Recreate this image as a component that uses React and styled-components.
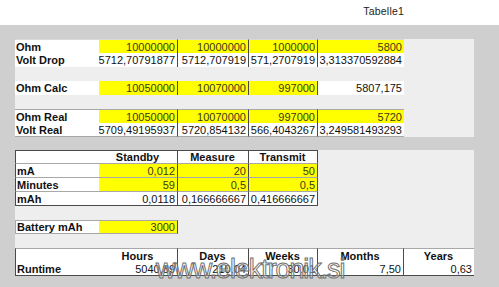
import React from "react";
import styled, { createGlobalStyle } from "styled-components";

const GlobalStyle = createGlobalStyle`
  body {
    margin: 0;
    background: #ffffff;
    font-family: "Liberation Sans", Arial, sans-serif;
  }
`;

const COLS = "84px 79px 71px 69px 86px 70px";
const DARK = "#4a4a4a";
const LIGHT = "#a8a8a8";

const Page = styled.div`
  width: 499px;
  height: 287px;
  display: flex;
  flex-direction: column;
  overflow: hidden;
`;

const TitleBar = styled.div`
  height: 25px;
  box-sizing: border-box;
  display: flex;
  justify-content: flex-end;
  padding: 5px 95px 0 0;
  font-size: 10.5px;
  color: #222;
  letter-spacing: 0.2px;
`;

const Canvas = styled.div`
  position: relative;
  flex: 1;
  background: #cfcfcf;
  padding: 14px 25px 0 15px;
  display: flex;
  flex-direction: column;
  gap: 13px;
`;

const Sheet = styled.div`
  width: 459px;
  background: #eeeeee;
  display: flex;
  flex-direction: column;
`;

const Row = styled.div`
  display: grid;
  grid-template-columns: ${COLS};
  height: 14px;
`;

const fills = { yellow: "#ffff00", white: "#ffffff" };

const Cell = styled.div`
  box-sizing: border-box;
  height: 14px;
  display: flex;
  align-items: center;
  justify-content: ${(p) =>
    p.$align === "left" ? "flex-start" : p.$align === "center" ? "center" : "flex-end"};
  padding: 0 2px 0 1px;
  white-space: nowrap;
  overflow: hidden;
  font-size: 11px;
  font-weight: ${(p) => (p.$bold ? 700 : 400)};
  color: ${(p) => (p.$fill === "yellow" ? "#3a3a1a" : "#111")};
  background: ${(p) => fills[p.$fill] || "transparent"};
  border-top: ${(p) => (p.$top ? `1px solid ${p.$top}` : "none")};
  border-bottom: ${(p) => (p.$bottom ? `1px solid ${p.$bottom}` : "none")};
  border-left: ${(p) => (p.$left ? `1px solid ${p.$left}` : "none")};
  border-right: ${(p) => (p.$right ? `1px solid ${DARK}` : "none")};
`;

const Watermark = styled.div`
  position: absolute;
  left: 156px;
  top: 231px;
  font-size: 27px;
  line-height: 1;
  letter-spacing: -1.1px;
  color: rgba(255, 255, 255, 0.35);
  -webkit-text-stroke: 1px #707070;
  pointer-events: none;
`;

// t = text, f = fill, b = bold, a = align, r = right border
const L = (t) => ({ t, f: "white", b: true, a: "left" });
const Y = (t, r = true) => ({ t, f: "yellow", r });
const W = (t, r = true) => ({ t, f: "white", r });
const H = (t, r = true) => ({ t, f: "white", b: true, a: "center", r });
const E = {};

function SheetRow({ cells = [], top, bottom, left }) {
  const list = [...cells];
  while (list.length < 6) list.push(E);
  return (
    <Row>
      {list.map((c, i) => (
        <Cell
          key={i}
          $fill={c.f}
          $bold={c.b}
          $align={c.a}
          $right={c.r}
          $top={c.f ? top : undefined}
          $bottom={c.f ? bottom : undefined}
          $left={i === 0 && c.f ? left : undefined}
        >
          {c.t}
        </Cell>
      ))}
    </Row>
  );
}

export default function App() {
  return (
    <Page>
      <GlobalStyle />
      <TitleBar>Tabelle1</TitleBar>
      <Canvas>
        <Sheet>
          <SheetRow
            top="#d8d8d8"
            cells={[L("Ohm"), Y("10000000"), Y("10000000"), Y("1000000"), Y("5800", false)]}
          />
          <SheetRow
            cells={[
              L("Volt Drop"),
              W("5712,70791877"),
              W("5712,707919"),
              W("571,2707919"),
              W("3,313370592884", false),
            ]}
          />
          <SheetRow />
          <SheetRow
            cells={[L("Ohm Calc"), Y("10050000"), Y("10070000"), Y("997000"), W("5807,175", false)]}
          />
          <SheetRow />
          <SheetRow
            top={LIGHT}
            cells={[L("Ohm Real"), Y("10050000"), Y("10070000"), Y("997000"), Y("5720", false)]}
          />
          <SheetRow
            bottom={LIGHT}
            cells={[
              L("Volt Real"),
              W("5709,49195937"),
              W("5720,854132"),
              W("566,4043267"),
              W("3,249581493293", false),
            ]}
          />
        </Sheet>

        <Sheet>
          <SheetRow
            top={DARK}
            bottom={LIGHT}
            left={DARK}
            cells={[{ f: "white" }, H("Standby"), H("Measure"), H("Transmit")]}
          />
          <SheetRow
            bottom={LIGHT}
            left={DARK}
            cells={[L("mA"), Y("0,012"), Y("20"), Y("50")]}
          />
          <SheetRow
            bottom={LIGHT}
            left={DARK}
            cells={[L("Minutes"), Y("59"), Y("0,5"), Y("0,5")]}
          />
          <SheetRow
            bottom={DARK}
            left={DARK}
            cells={[L("mAh"), W("0,0118"), W("0,166666667"), W("0,416666667")]}
          />
          <SheetRow />
          <SheetRow
            top={LIGHT}
            bottom={LIGHT}
            left={LIGHT}
            cells={[L("Battery mAh"), Y("3000")]}
          />
          <SheetRow />
          <SheetRow
            top={LIGHT}
            left={DARK}
            cells={[{ f: "white" }, H("Hours"), H("Days"), H("Weeks"), H("Months"), H("Years", false)]}
          />
          <SheetRow
            bottom={DARK}
            left={DARK}
            cells={[
              L("Runtime"),
              W("5040,89"),
              W("210,04"),
              W("30,01"),
              W("7,50"),
              W("0,63", false),
            ]}
          />
        </Sheet>
        <Watermark>www.elektronik.si</Watermark>
      </Canvas>
    </Page>
  );
}
